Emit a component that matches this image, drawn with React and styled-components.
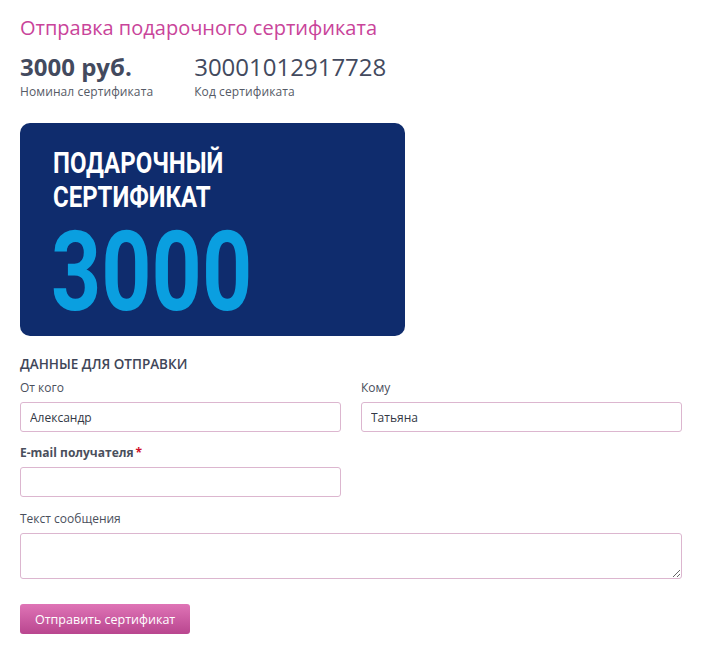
import React, { useState } from "react";
import styled, { createGlobalStyle } from "styled-components";

const GlobalStyle = createGlobalStyle`
  body {
    margin: 0;
    background: #ffffff;
    font-family: "Open Sans", "Noto Sans", sans-serif;
    color: #444a5c;
  }
`;

const Page = styled.div`
  padding: 14px 20px 20px;
  width: 662px;
`;

const Title = styled.h1`
  margin: 0;
  font-size: 20px;
  font-weight: 400;
  color: #c9449a;
  line-height: 28px;
`;

const Summary = styled.div`
  display: flex;
  gap: 41px;
  margin-top: 10px;
`;

const SummaryItem = styled.div`
  display: flex;
  flex-direction: column;
`;

const SummaryValue = styled.div`
  font-size: 24px;
  line-height: 30px;
  font-weight: ${(p) => (p.$bold ? 700 : 400)};
  color: #434a5e;
`;

const SummaryCaption = styled.div`
  font-size: 12px;
  line-height: 16px;
  margin-top: 2px;
  color: #555a66;
  letter-spacing: 0.1px;
`;

const Card = styled.div`
  margin-top: 23px;
  width: 385px;
  height: 213px;
  box-sizing: border-box;
  border-radius: 10px;
  background: #0f2c6d;
  padding: 23px 0 0 33px;
  overflow: hidden;
`;

const CardHeading = styled.div`
  font-family: Roboto, "Liberation Sans", sans-serif;
  font-weight: 700;
  font-size: 29px;
  line-height: 34px;
  color: #ffffff;
  transform: scaleX(0.826);
  transform-origin: left top;
  white-space: nowrap;
`;

const CardAmount = styled.div`
  font-family: Roboto, "Liberation Sans", sans-serif;
  font-weight: 700;
  font-size: 111px;
  line-height: 111px;
  color: #0a9fe0;
  margin-top: 3px;
  margin-left: -2px;
  transform: scaleX(0.79);
  transform-origin: left top;
  white-space: nowrap;
`;

const SectionTitle = styled.div`
  margin-top: 19px;
  font-size: 13.5px;
  line-height: 18px;
  font-weight: 600;
  color: #3f4658;
  text-transform: uppercase;
`;

const Row = styled.div`
  display: grid;
  grid-template-columns: 1fr 1fr;
  column-gap: 20px;
  margin-top: 7px;
`;

const Field = styled.div`
  display: flex;
  flex-direction: column;
  margin-top: ${(p) => p.$gap || 0}px;
  width: ${(p) => (p.$half ? "321px" : "auto")};
`;

const Label = styled.label`
  font-size: 12px;
  line-height: 16px;
  font-weight: ${(p) => (p.$bold ? 700 : 400)};
  color: #4a4f5c;
  margin-bottom: 6px;
`;

const Required = styled.span`
  color: #d0102a;
  margin-left: 2px;
`;

const Input = styled.input`
  height: 30px;
  box-sizing: border-box;
  border: 1px solid #dcb6cf;
  border-radius: 3px;
  padding: 0 9px;
  font-family: "Open Sans", "Noto Sans", sans-serif;
  font-size: 12px;
  color: #333845;
  outline: none;
`;

const TextArea = styled.textarea`
  height: 46px;
  box-sizing: border-box;
  border: 1px solid #dcb6cf;
  border-radius: 3px;
  padding: 6px 9px;
  font-family: "Open Sans", "Noto Sans", sans-serif;
  font-size: 12px;
  resize: vertical;
  outline: none;
`;

const SubmitButton = styled.button`
  align-self: flex-start;
  margin-top: 25px;
  height: 30px;
  padding: 0 15px;
  border: none;
  border-radius: 3px;
  background: linear-gradient(#df74b6, #b9468f);
  color: #ffffff;
  font-family: "Open Sans", "Noto Sans", sans-serif;
  font-size: 12.5px;
  cursor: pointer;
`;

const App = () => {
  const [form, setForm] = useState({
    from: "Александр",
    to: "Татьяна",
    email: "",
    message: "",
  });

  const handleChange = (e) => {
    setForm({ ...form, [e.target.name]: e.target.value });
  };

  return (
    <>
      <GlobalStyle />
      <Page>
        <Title>Отправка подарочного сертификата</Title>
        <Summary>
          <SummaryItem>
            <SummaryValue $bold>3000 руб.</SummaryValue>
            <SummaryCaption>Номинал сертификата</SummaryCaption>
          </SummaryItem>
          <SummaryItem>
            <SummaryValue>30001012917728</SummaryValue>
            <SummaryCaption>Код сертификата</SummaryCaption>
          </SummaryItem>
        </Summary>

        <Card>
          <CardHeading>
            ПОДАРОЧНЫЙ
            <br />
            СЕРТИФИКАТ
          </CardHeading>
          <CardAmount>3000</CardAmount>
        </Card>

        <SectionTitle>Данные для отправки</SectionTitle>
        <Row>
          <Field>
            <Label>От кого</Label>
            <Input name="from" value={form.from} onChange={handleChange} />
          </Field>
          <Field>
            <Label>Кому</Label>
            <Input name="to" value={form.to} onChange={handleChange} />
          </Field>
        </Row>
        <Field $gap={13} $half>
          <Label $bold>
            E-mail получателя<Required>*</Required>
          </Label>
          <Input name="email" type="email" value={form.email} onChange={handleChange} />
        </Field>
        <Field $gap={14}>
          <Label>Текст сообщения</Label>
          <TextArea name="message" value={form.message} onChange={handleChange} />
        </Field>
        <SubmitButton>Отправить сертификат</SubmitButton>
      </Page>
    </>
  );
};

export default App;
